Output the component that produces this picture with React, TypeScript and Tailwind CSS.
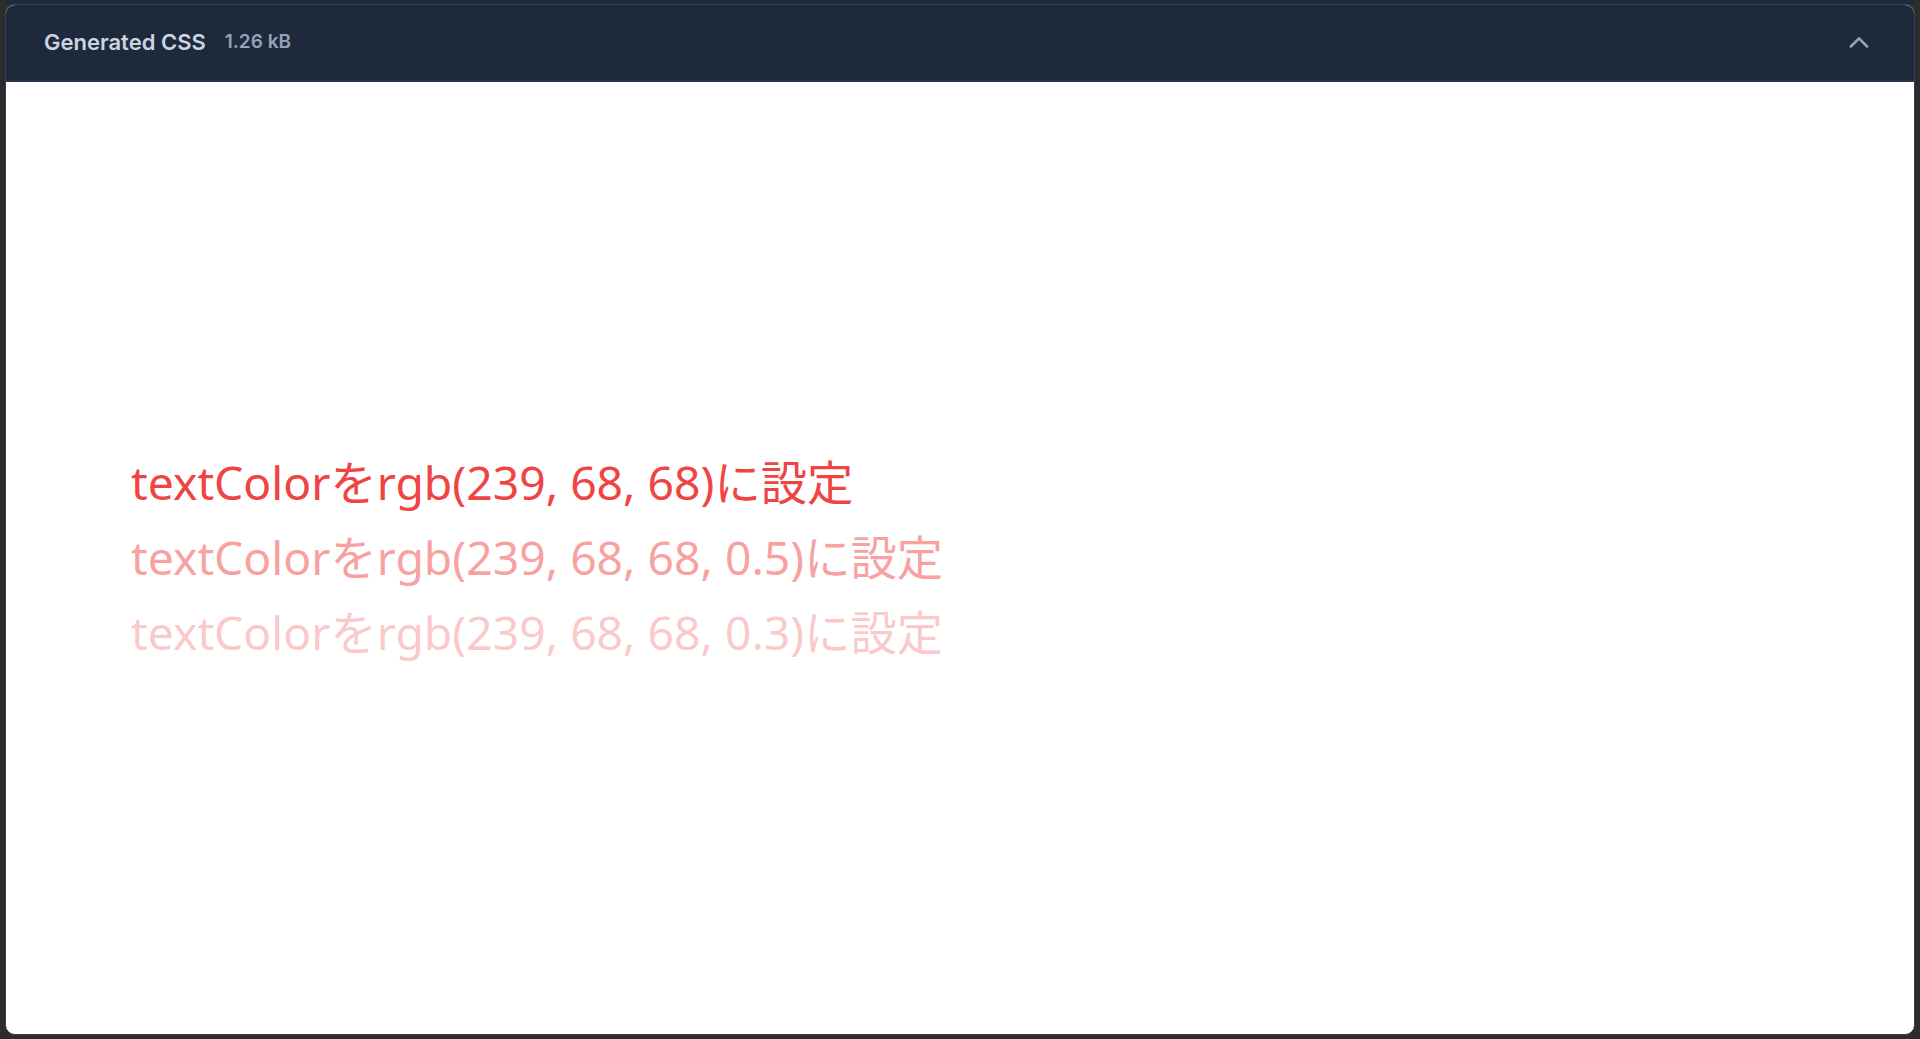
import React from "react";

export default function App() {
  const font = { fontFamily: '"Noto Sans", "Noto Sans CJK JP", sans-serif' };
  return (
    <div className="h-[1039px] w-full bg-[#2c2c2c] flex flex-col pl-[5px] pr-[5px] pb-[4px] overflow-hidden">
      <div className="h-[4px] bg-[#1e293b] ml-[1px] mr-[1px]" />
      <div className="flex-1 flex flex-col rounded-[10px] border border-[#334155] overflow-hidden bg-white">
        <div className="h-[77px] shrink-0 bg-[#1e293b] border-b-2 border-[#2a3649] flex items-center pl-[38px] pr-[41px]">
          <span className="text-[22px] font-semibold text-[#cbd5e1]" style={{ fontFamily: 'Inter, "Liberation Sans", sans-serif' }}>
            Generated CSS
          </span>
          <span className="ml-[19px] text-[19px] font-semibold text-[#94a3b8]" style={{ fontFamily: 'Inter, "Liberation Sans", sans-serif' }}>
            1.26 kB
          </span>
          <div className="flex-1" />
          <svg width="28" height="28" viewBox="0 0 24 24" fill="none" stroke="#94a3b8" strokeWidth="2.2" strokeLinecap="round" strokeLinejoin="round">
            <path d="M5 15l7-7 7 7" />
          </svg>
        </div>
        <div className="flex-1 flex flex-col justify-center pl-[125px] pb-[2px]" style={font}>
          <div className="text-[46.3px] leading-[75px] text-[rgb(239,68,68)]">textColorをrgb(239, 68, 68)に設定</div>
          <div className="text-[46.3px] leading-[75px] text-[rgba(239,68,68,0.5)]">textColorをrgb(239, 68, 68, 0.5)に設定</div>
          <div className="text-[46.3px] leading-[75px] text-[rgba(239,68,68,0.3)]">textColorをrgb(239, 68, 68, 0.3)に設定</div>
        </div>
      </div>
    </div>
  );
}
